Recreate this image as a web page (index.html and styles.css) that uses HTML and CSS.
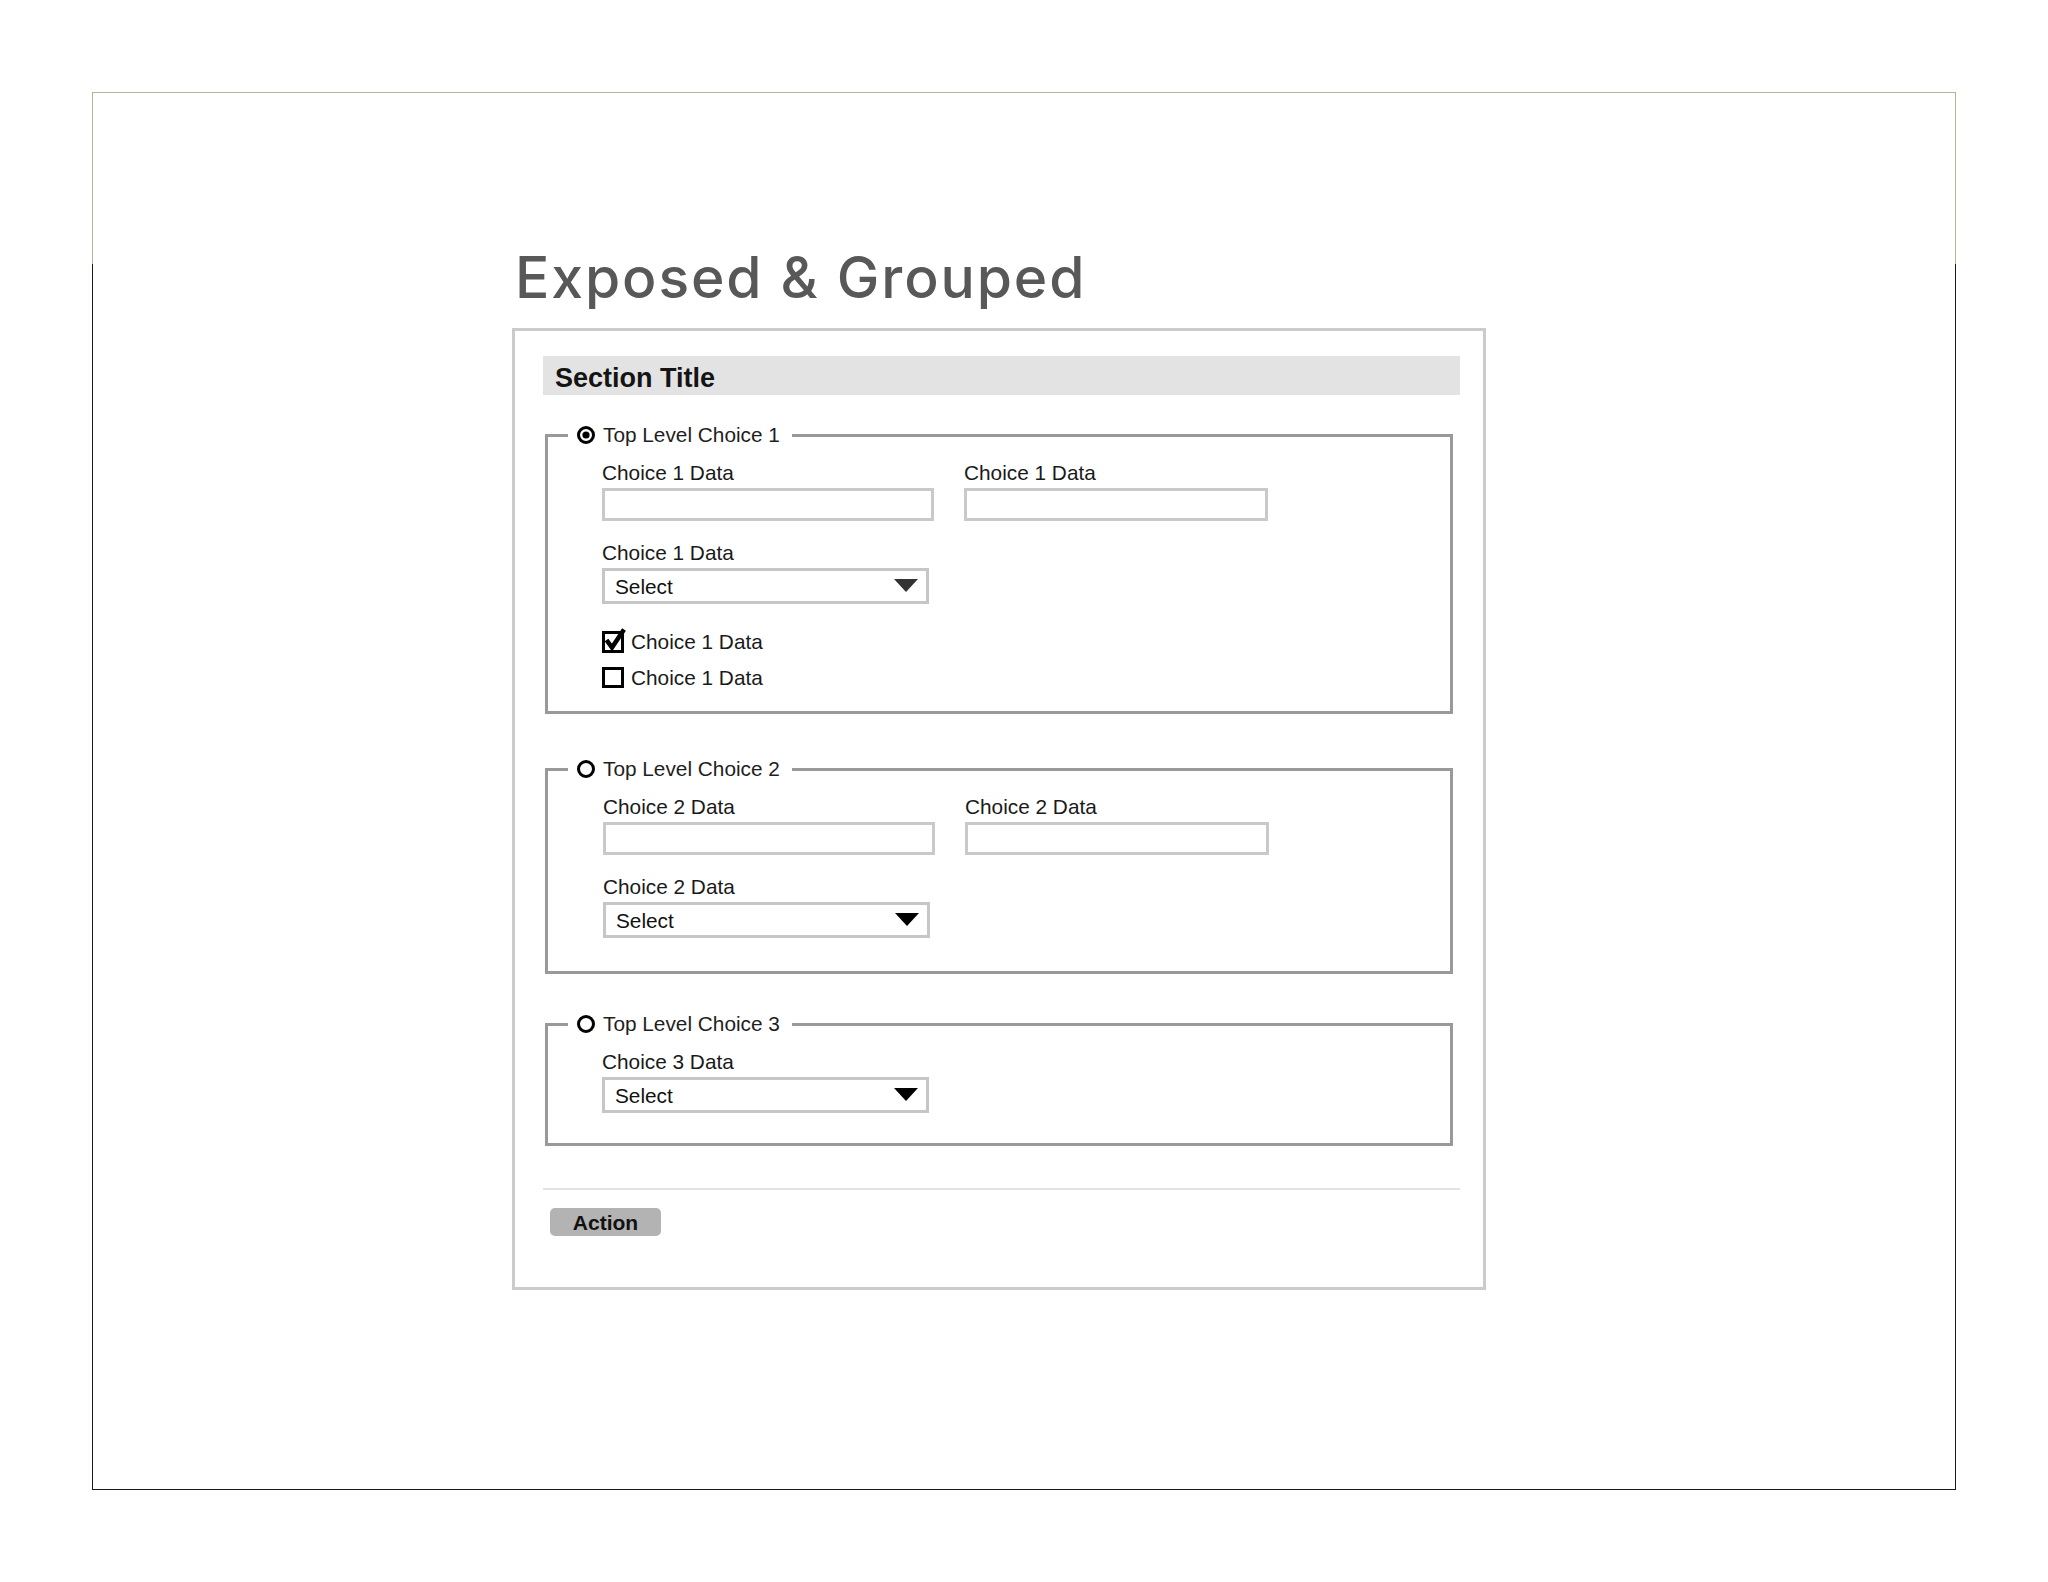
FILE: index.html
```html
<!DOCTYPE html>
<html lang="en">
<head>
<meta charset="utf-8">
<title>Exposed &amp; Grouped</title>
<link rel="stylesheet" href="styles.css">
</head>
<body>
<div class="frame">
  <div class="content">
    <h1 class="title">Exposed &amp; Grouped</h1>
    <div class="panel">
      <div class="section-bar">Section Title</div>

      <fieldset class="group g1">
        <legend class="legend">
          <svg class="radio" width="18" height="18" viewBox="0 0 18 18"><circle cx="9" cy="9" r="7.5" fill="#fff" stroke="#000" stroke-width="3"/><circle cx="9" cy="9" r="3.6" fill="#000"/></svg>
          <span>Top Level Choice 1</span>
        </legend>
        <div class="group-body pb1">
          <div class="row two">
            <div class="field"><div class="label">Choice 1 Data</div><div class="input wide"></div></div>
            <div class="field"><div class="label">Choice 1 Data</div><div class="input narrow"></div></div>
          </div>
          <div class="row">
            <div class="field"><div class="label">Choice 1 Data</div>
              <div class="select"><span>Select</span><svg class="arrow" width="24" height="13" viewBox="0 0 24 13"><path d="M0 0H24L12 13Z" fill="#333"/></svg></div>
            </div>
          </div>
          <div class="checks">
            <div class="check">
              <svg class="box" width="26" height="26" viewBox="0 0 26 26"><rect x="1.5" y="4.5" width="19" height="19" fill="#fff" stroke="#000" stroke-width="3"/><path d="M4.5 12L10 19.5L22 1.5" fill="none" stroke="#000" stroke-width="4.6"/></svg>
              <span>Choice 1 Data</span>
            </div>
            <div class="check">
              <svg class="box" width="26" height="26" viewBox="0 0 26 26"><rect x="1.5" y="4.5" width="19" height="18" fill="#fff" stroke="#000" stroke-width="3"/></svg>
              <span>Choice 1 Data</span>
            </div>
          </div>
        </div>
      </fieldset>

      <fieldset class="group g2">
        <legend class="legend">
          <svg class="radio" width="18" height="18" viewBox="0 0 18 18"><circle cx="9" cy="9" r="7.5" fill="#fff" stroke="#000" stroke-width="3"/></svg>
          <span>Top Level Choice 2</span>
        </legend>
        <div class="group-body pb2 shift">
          <div class="row two">
            <div class="field"><div class="label">Choice 2 Data</div><div class="input wide"></div></div>
            <div class="field"><div class="label">Choice 2 Data</div><div class="input narrow"></div></div>
          </div>
          <div class="row">
            <div class="field"><div class="label">Choice 2 Data</div>
              <div class="select"><span>Select</span><svg class="arrow" width="24" height="13" viewBox="0 0 24 13"><path d="M0 0H24L12 13Z" fill="#000"/></svg></div>
            </div>
          </div>
        </div>
      </fieldset>

      <fieldset class="group g3">
        <legend class="legend">
          <svg class="radio" width="18" height="18" viewBox="0 0 18 18"><circle cx="9" cy="9" r="7.5" fill="#fff" stroke="#000" stroke-width="3"/></svg>
          <span>Top Level Choice 3</span>
        </legend>
        <div class="group-body pb3">
          <div class="field"><div class="label">Choice 3 Data</div>
            <div class="select"><span>Select</span><svg class="arrow" width="24" height="13" viewBox="0 0 24 13"><path d="M0 0H24L12 13Z" fill="#000"/></svg></div>
          </div>
        </div>
      </fieldset>

      <div class="separator"></div>
      <div class="action">Action</div>
    </div>
  </div>
</div>
</body>
</html>
```

FILE: styles.css
```css
* { box-sizing: border-box; }

html, body {
  margin: 0;
  padding: 0;
  background: #ffffff;
}

body {
  font-family: "Liberation Sans", Arial, sans-serif;
  color: #1a1a1a;
}

.frame {
  margin: 92px 0 0 92px;
  width: 1864px;
  height: 1398px;
  border: 1px solid transparent;
  border-image: linear-gradient(to bottom, #b4b496 0, #b4b496 172px, #1b1b1b 172px, #1b1b1b 100%) 1;
}

.content {
  margin-left: 419px;
  width: 974px;
}

.title {
  margin: 0;
  padding-top: 156px;
  font-family: Inter, "Noto Sans", sans-serif;
  font-weight: 500;
  font-size: 57px;
  line-height: 57px;
  color: #585858;
  letter-spacing: 1.9px;
  padding-left: 3px;
  white-space: nowrap;
}

.panel {
  margin-top: 22px;
  width: 974px;
  border: 3px solid #cbcbcb;
  padding: 25px 23px 51px 28px;
}

.section-bar {
  height: 39px;
  width: 917px;
  background: #e3e3e3;
  padding: 6px 0 0 12px;
  font-weight: bold;
  font-size: 27px;
  line-height: 33px;
  color: #141414;
}

.group {
  margin: 0 0 0 2px;
  padding: 0;
  width: 908px;
  border: 3px solid #999999;
  min-width: 0;
}

.g1 { margin-top: 28px; }
.g2 { margin-top: 43px; }
.g3 { margin-top: 38px; }

.legend {
  margin-left: 20px;
  padding: 0 12px 0 9px;
  display: flex;
  align-items: center;
  gap: 8px;
  height: 24px;
  font-size: 20.8px;
  line-height: 24px;
  color: #1e1e1e;
}

.radio { display: block; }

.group-body {
  padding: 14px 0 0 54px;
}

.group-body.shift { padding-left: 55px; }

.pb1 { padding-bottom: 21px; }
.pb2 { padding-bottom: 33px; }
.pb3 { padding-bottom: 30px; }

.row + .row { margin-top: 20px; }

.row.two {
  display: grid;
  grid-template-columns: 332px 304px;
  column-gap: 30px;
}

.label {
  font-size: 20.8px;
  line-height: 24px;
  margin-bottom: 3px;
  color: #1a1a1a;
}

.input {
  height: 33px;
  border: 3px solid #c9c9c9;
  background: #fff;
}

.input.wide { width: 332px; }
.input.narrow { width: 304px; }

.select {
  width: 327px;
  height: 36px;
  border: 3px solid #c6c6c6;
  display: flex;
  align-items: center;
  justify-content: space-between;
  padding: 0 8px 0 10px;
  font-size: 20.8px;
  color: #111;
}

.select span { padding-top: 2px; }

.arrow { display: block; margin-top: -1px; }

.checks {
  margin-top: 26px;
  display: flex;
  flex-direction: column;
  gap: 12px;
}

.check {
  display: flex;
  align-items: center;
  gap: 3px;
  height: 24px;
  font-size: 20.8px;
  color: #1a1a1a;
}

.box { display: block; margin-top: -2px; }

.separator {
  margin-top: 42px;
  width: 917px;
  height: 2px;
  background: #e3e3e3;
}

.action {
  margin: 18px 0 0 7px;
  width: 111px;
  height: 28px;
  border-radius: 5px;
  background: #b3b3b3;
  font-weight: bold;
  font-size: 21px;
  line-height: 29px;
  text-align: center;
  color: #111;
}
```
